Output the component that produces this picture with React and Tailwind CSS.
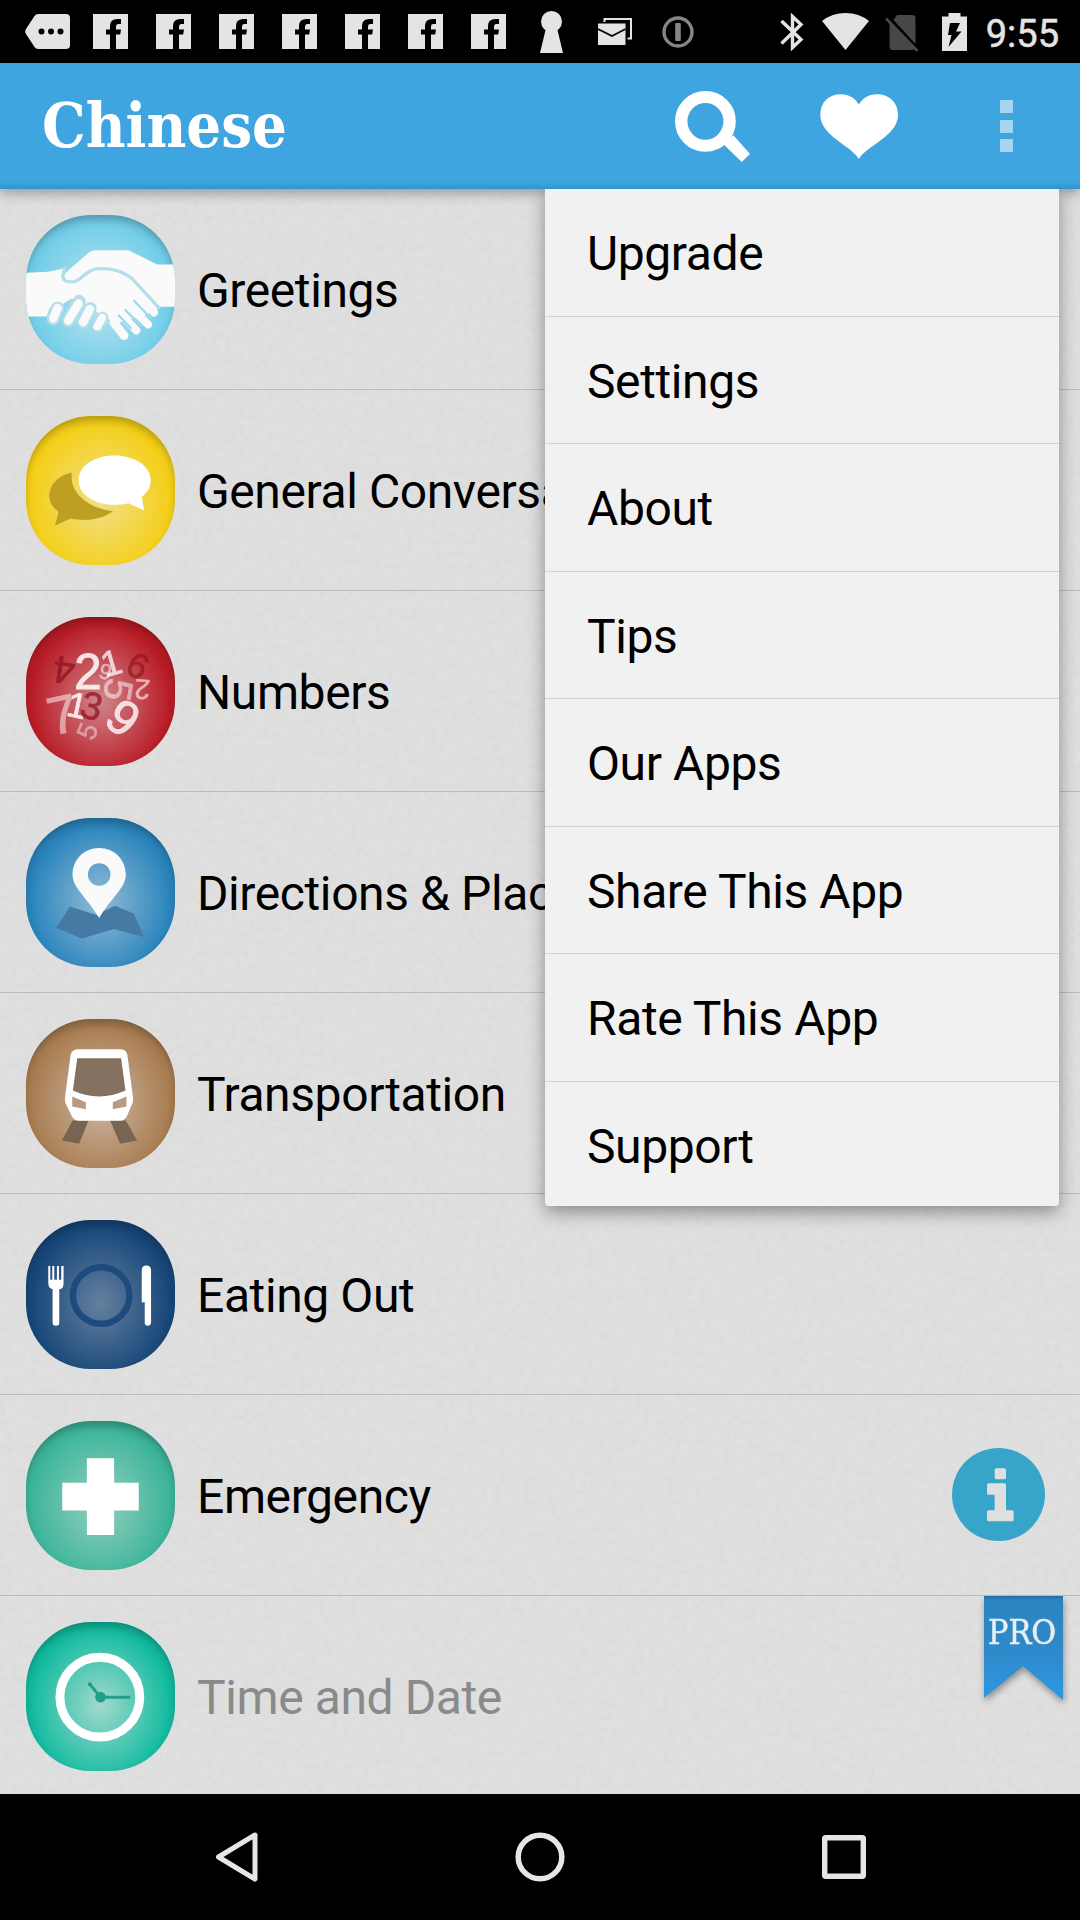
import React from "react";

const statusInk = "#e4e4e4";

/* ---------- status bar icons ---------- */

function PillIcon() {
  return (
    <svg width="45" height="35" viewBox="0 0 45 35" className="block">
      <path d="M13 0H41Q45 0 45 4V31Q45 35 41 35H13Q11 35 9.500 33L1 20Q-.5 17.500 1 15L9.500 2Q11 0 13 0Z" fill={statusInk} />
      <circle cx="16.500" cy="17.500" r="3" />
      <circle cx="26" cy="17.500" r="3" />
      <circle cx="35.500" cy="17.500" r="3" />
    </svg>
  );
}

function FacebookIcon() {
  return (
    <svg width="35" height="35" viewBox="0 0 35 35" className="block">
      <path d="M0 0H35V35H0Z" fill={statusInk} />
      <path d="M28 5V10H25Q23 10 23 12.500V15.500H28L27.200 20.500H23V35H17V20.500H13V15.500H17V12Q17 5 24.500 5Z" />
    </svg>
  );
}

function KeyholeIcon() {
  return (
    <svg width="23" height="42" viewBox="0 0 23 42" className="block">
      <circle cx="11.500" cy="10.500" r="10.500" fill={statusInk} />
      <path d="M6 17H17L23 42H0Z" fill={statusInk} />
    </svg>
  );
}

function MailIcon() {
  return (
    <svg width="34" height="27" viewBox="0 0 34 27" className="block">
      <path d="M6.500 4V1H33V20.500H29.500" fill="none" stroke={statusInk} strokeWidth="2" />
      <path d="M0 5.500H27.500V27H0Z" fill={statusInk} />
      <path d="M0 11L14 18L27.500 11" fill="none" stroke="#000" strokeWidth="1.600" />
    </svg>
  );
}

function KeyRingIcon() {
  return (
    <svg width="32" height="32" viewBox="0 0 32 32" className="block">
      <circle cx="16" cy="16" r="14" fill="none" stroke="#868686" strokeWidth="3.400" />
      <rect x="13.200" y="7" width="5.600" height="18" rx="1" fill="#868686" />
    </svg>
  );
}

function BluetoothIcon() {
  return (
    <svg width="24" height="38" viewBox="0 0 24 38" className="block">
      <path d="M1.500 8L21 26.500L12.500 34.500V3.500L21 11.500L1.500 30.500" fill="none" stroke={statusInk} strokeWidth="3.400" />
    </svg>
  );
}

function WifiIcon() {
  return (
    <svg width="47" height="37" viewBox="0 0 47 37" className="block">
      <path d="M0 8Q10 0 23.500 0T47 8L23.500 37Z" fill={statusInk} />
    </svg>
  );
}

function NoSimIcon() {
  return (
    <svg width="34" height="37" viewBox="0 0 34 37" className="block">
      <path d="M12 0H27Q30.500 0 30.500 3V29L8.500 5ZM4.500 7L30 34Q29 35 27 35H7.500Q4.500 35 4.500 32Z" fill="#474747" />
      <path d="M1 3.500L32.500 36" stroke="#474747" strokeWidth="2.600" />
    </svg>
  );
}

function BatteryIcon() {
  return (
    <svg width="25" height="38" viewBox="0 0 25 38" className="block">
      <path d="M6.500 0H18.500V3.500H25V38H0V3.500H6.500Z" fill={statusInk} />
      <path d="M8 10H18L14 18.500H19.500L6.500 34L9.500 22H6Z" />
    </svg>
  );
}

function StatusBar() {
  return (
    <div className="flex h-[63px] items-center bg-black">
      <div className="flex items-center pl-4">
        <div className="flex w-[63px] justify-center"><PillIcon /></div>
        {[1, 2, 3, 4, 5, 6, 7].map((n) => (
          <div key={n} className="flex w-[63px] justify-center"><FacebookIcon /></div>
        ))}
        <div className="flex w-[63px] justify-center"><KeyholeIcon /></div>
        <div className="flex w-[63px] justify-center"><MailIcon /></div>
        <div className="flex w-[63px] justify-center"><KeyRingIcon /></div>
      </div>
      <div className="ml-auto flex items-center pr-[21px]">
        <BluetoothIcon />
        <div className="ml-[18px]"><WifiIcon /></div>
        <div className="ml-4 mt-1"><NoSimIcon /></div>
        <div className="ml-[23px]"><BatteryIcon /></div>
        <div className="ml-[18px] mt-[4px] w-[74px] text-right text-[38px] leading-[40px] text-[#e4e4e4] [-webkit-text-stroke:0.5px_#e4e4e4]">9:55</div>
      </div>
    </div>
  );
}

/* ---------- app header ---------- */

function Header() {
  return (
    <header className="relative z-20 flex h-[126px] items-center bg-[#3ea5e1] bg-linear-to-b from-[#3ea5e1] from-94% to-[#3292d0] pl-[42px] shadow-[0_4px_12px_rgba(0,0,0,0.32)]">
      <h1 className="w-[245px] origin-left scale-x-[0.885] whitespace-nowrap font-['DejaVu_Serif'] text-[62px] font-bold leading-[70px] text-white">Chinese</h1>
      <svg width="75" height="71" viewBox="393 272 217 213" preserveAspectRatio="none" className="ml-[388px] block">
        <ellipse cx="481" cy="363" rx="70" ry="73" fill="none" stroke="#fff" strokeWidth="36" />
        <path d="M532 430L562 405L610 461L586 485Z" fill="#fff" />
      </svg>
      <svg width="78" height="65" viewBox="815 281 225 191" preserveAspectRatio="none" className="ml-[70px] block">
        <path d="M927 472C905 432 816 405 816 342C816 306 840 282 875 282C900 282 918 296 927 312C936 296 954 282 979 282C1014 282 1040 306 1040 342C1040 405 950 432 927 472Z" fill="#fff" />
      </svg>
      <div className="ml-[102px] flex flex-col gap-[6.500px]">
        <span className="size-[13px] bg-[#a6d4f1]" />
        <span className="size-[13px] bg-[#a6d4f1]" />
        <span className="size-[13px] bg-[#a6d4f1]" />
      </div>
    </header>
  );
}

/* ---------- category art, drawn in a 448-unit square ---------- */

function Art({ top, children }) {
  return (
    <svg width="149" height="149" viewBox={`78 ${top} 448 448`} className="block">
      {children}
    </svg>
  );
}

function HandshakeArt() {
  const gap = "#b3deea";
  const skin = "#fafafa";
  return (
    <Art top={75}>
      <path d="M527 224H473L392 184Q388 181 380 181H290Q277 181 267 188L205 242Q188 256 192 268L300 300L420 300L482 351H527Z" fill={skin} />
      <path d="M78 249L145 246L194 235L187 258C184 274 200 279 222 278C246 276 258 240 290 237C330 233 370 246 398 268L474 358L440 375L345 402L326 388L290 366L254 340L215 326L186 344L150 352L140 380H78Z" fill={skin} />
      <path d="M194 235L189 256C187 274 204 277 222 276C246 272 258 240 290 237C330 233 370 244 398 267L478 354" fill="none" stroke={gap} strokeWidth="10" strokeLinecap="round" strokeLinejoin="round" />
      <g strokeLinecap="round" stroke={gap}>
        <path d="M173 355L160 386" strokeWidth="40" />
        <path d="M238 335L206 392" strokeWidth="40" />
        <path d="M271 356L250 396" strokeWidth="39" />
        <path d="M308 384L294 410" strokeWidth="36" />
      </g>
      <g strokeLinecap="round" stroke={skin}>
        <path d="M173 355L160 386" strokeWidth="26" />
        <path d="M236 341L205 392" strokeWidth="26" />
        <path d="M270 358L250 397" strokeWidth="26" />
        <path d="M307 384L293 410" strokeWidth="24" />
        <path d="M342 398L373 438" strokeWidth="26" />
        <path d="M360 370L410 422" strokeWidth="24" />
        <path d="M385 345L445 404" strokeWidth="24" />
        <path d="M400 300L463 368" strokeWidth="24" />
      </g>
      <path d="M357 377L393 415M377 361L424 408M403 333L452 384" fill="none" stroke="#9fd9ea" strokeWidth="7" strokeLinecap="round" />
    </Art>
  );
}

function ChatArt() {
  return (
    <Art top={678}>
      <path d="M216 848C172 858 148 886 148 918C148 938 160 955 176 966L165 1008L212 986C262 996 310 989 340 964C274 958 206 914 216 848Z" fill="#bda021" />
      <path d="M343 797C405 797 453 829 453 872C453 893 443 908 426 921L433 962L386 940C373 944 358 945 343 945C283 945 236 913 236 872C236 829 283 797 343 797Z" fill="#fff" />
    </Art>
  );
}

/* glyph, centre x, centre y, size, rotation, colour, opacity */
const digits = [
  ["4", 192, 243, 116, 188, "#8a0f1c", 0.7],
  ["2", 264, 244, 148, 0, "#fff", 0.85],
  ["9", 317, 244, 66, 14, "#fff", 0.55],
  ["1", 334, 217, 108, -16, "#fff", 0.75],
  ["6", 415, 226, 106, 28, "#8a0f1c", 0.6],
  ["5", 357, 300, 118, 100, "#fff", 0.5],
  ["2", 428, 300, 84, 184, "#fff", 0.6],
  ["7", 187, 372, 160, -12, "#fff", 0.5],
  ["1", 232, 345, 106, 12, "#fff", 0.85],
  ["3", 276, 347, 116, 14, "#8a0f1c", 0.7],
  ["9", 372, 382, 148, 38, "#fff", 0.8],
  ["5", 261, 424, 82, -68, "#fff", 0.42],
];

function NumbersArt() {
  return (
    <Art top={81}>
      {digits.map(([d, x, y, size, turn, color, alpha], i) => (
        <text
          key={i}
          transform={`translate(${x} ${y}) rotate(${turn})`}
          y={size * 0.36}
          textAnchor="middle"
          fontFamily="Liberation Sans, sans-serif"
          fontSize={size}
          fill={color}
          stroke={color}
          strokeWidth={size / 50}
          opacity={alpha}
        >
          {d}
        </text>
      ))}
    </Art>
  );
}

function MapArt() {
  return (
    <Art top={684}>
      <path d="M210 950L290 976L345 948L402 971L433 1042L343 1018L246 1046L168 1015Z" fill="#4779a5" />
      <path fillRule="evenodd" d="M298 774C344 774 378 810 378 854C378 895 336 920 298 985C260 920 218 895 218 854C218 810 252 774 298 774ZM298 820A34 34 0 1 0 298 888A34 34 0 1 0 298 820Z" fill="#fafafa" />
    </Art>
  );
}

function TrainArt() {
  return (
    <Art top={87}>
      <path d="M218 392H266L238 462L186 452ZM331 392H378L412 452L361 462Z" fill="#776452" />
      <path d="M237 178H361Q380 178 383 196L400 325Q401 335 396 345L382 378Q375 393 360 393H238Q222 393 215 378L199 345Q194 335 195 325L212 196Q215 178 237 178Z" fill="#fff" />
      <path d="M232 205H364L377 302Q298 338 219 302Z" fill="#85715f" />
      <path d="M217 320L258 337V358L217 350ZM380 320L339 337V358L380 350Z" fill="#b89a80" />
    </Art>
  );
}

function DiningArt() {
  return (
    <Art top={690}>
      <circle cx="304" cy="917" r="85" fill="none" stroke="#1d4b7d" strokeWidth="19" />
      <path d="M145 828H151V870H157V828H163V870H171V828H177V870H184V828H191V880Q191 898 178 898V999Q178 1008 168 1008T158 999V898Q146 896 145 880Z" fill="#fff" />
      <path d="M440 827Q454 827 454 842V996Q454 1008 444 1008T435 996V937H426V842Q426 827 440 827Z" fill="#fff" />
    </Art>
  );
}

function CrossArt() {
  return (
    <Art top={93}>
      <path d="M261 205H343V279H417V362H343V436H261V362H187V279H261Z" fill="#fff" />
    </Art>
  );
}

function ClockArt() {
  return (
    <Art top={696}>
      <circle cx="300" cy="922" r="120" fill="none" stroke="#fff" strokeWidth="27" />
      <path d="M269 882L302 922H391" fill="none" stroke="#219e8a" strokeWidth="9" />
      <circle cx="302" cy="922" r="16" fill="#219e8a" />
      <circle cx="270" cy="883" r="6" fill="#219e8a" />
    </Art>
  );
}

const rows = [
  { label: "Greetings", Icon: HandshakeArt, tint: "from-[#bde3ec] to-[#72cee9]" },
  { label: "General Conversation", Icon: ChatArt, tint: "from-[#efe08c] to-[#f5cf18]" },
  { label: "Numbers", Icon: NumbersArt, tint: "from-[#d0858b] to-[#b91c26]" },
  { label: "Directions & Places", Icon: MapArt, tint: "from-[#93bcd7] to-[#2b85bc]" },
  { label: "Transportation", Icon: TrainArt, tint: "from-[#cbb6a4] to-[#a97d51]" },
  { label: "Eating Out", Icon: DiningArt, tint: "from-[#65809f] to-[#174779]" },
  { label: "Emergency", Icon: CrossArt, tint: "from-[#94cfbf] to-[#3db59a]", info: true },
  { label: "Time and Date", Icon: ClockArt, tint: "from-[#a3d9cd] to-[#12bba0]", locked: true },
];

function InfoIcon() {
  return (
    <svg width="93" height="93" viewBox="156 143 279 279" className="block">
      <circle cx="295.500" cy="282.500" r="139.500" fill="#36a5c9" />
      <path d="M289 204H313Q318 204 318 209V232Q318 237 313 237H289Q284 237 284 232V209Q284 204 289 204ZM266 249H313Q318 249 318 254V330H336Q341 330 341 335V358Q341 363 336 363H266Q261 363 261 358V335Q261 330 266 330H284V283H266Q261 283 261 278V254Q261 249 266 249Z" fill="#dfdfdf" />
    </svg>
  );
}

function ProRibbon() {
  return (
    <div className="relative mb-auto mr-[17px] w-[79px]">
      <svg width="79" height="104" viewBox="0 0 79 104" className="block overflow-visible drop-shadow-[1px_4px_3px_rgba(0,0,0,0.35)]">
        <defs>
          <linearGradient id="ribbon" x1="0" y1="0" x2="0" y2="1">
            <stop offset="0" stopColor="#1f6fa6" />
            <stop offset="0.04" stopColor="#2a85c2" />
            <stop offset="0.55" stopColor="#3089ca" />
            <stop offset="1" stopColor="#2b99e6" />
          </linearGradient>
        </defs>
        <path d="M0 0H79V104L39 70L0 102Z" fill="url(#ribbon)" />
      </svg>
      <span className="absolute left-[4px] top-[17px] origin-left scale-x-[0.92] font-['DejaVu_Serif'] text-[33px] leading-[40px] text-[#e6eef3] [-webkit-text-stroke:0.5px_#e6eef3]">PRO</span>
    </div>
  );
}

function Row({ label, Icon, tint, info, locked }) {
  return (
    <li className="flex h-[201px] shrink-0 items-center border-b border-[#bcbcbc] pl-[26px]">
      <div className={`size-[149px] shrink-0 overflow-hidden rounded-[65px] bg-radial-[at_50%_56%] to-66% ${tint}`}>
        <div className="rounded-[65px] shadow-[inset_0_6px_10px_-2px_rgba(0,0,0,0.3)]">
          <Icon />
        </div>
      </div>
      <span className={`ml-[22px] mt-[3px] max-w-[348px] overflow-hidden whitespace-nowrap text-[48px] leading-[58px] tracking-[-0.4px] ${locked ? "text-[#8a8a8a]" : "text-black"}`}>{label}</span>
      {info && <div className="mb-[2px] ml-auto mr-[35px]"><InfoIcon /></div>}
      {locked && <div className="ml-auto flex self-start"><ProRibbon /></div>}
    </li>
  );
}

const menuItems = ["Upgrade", "Settings", "About", "Tips", "Our Apps", "Share This App", "Rate This App", "Support"];

function OverflowMenu() {
  return (
    <div className="absolute left-[545px] top-0 z-30 h-[1017px] w-[514px] overflow-hidden rounded-b-[4px] bg-[#f1f1f1]">
      {menuItems.map((item) => (
        <div key={item} className="flex h-[127.500px] items-center border-b border-[#d2d2d2] pl-[42px] pt-[4px] text-[48px] leading-[56px] tracking-[-0.4px] text-black last:border-b-0">
          {item}
        </div>
      ))}
    </div>
  );
}

function PaperGrain() {
  return (
    <svg className="pointer-events-none absolute inset-0 size-full opacity-[0.06]">
      <filter id="grain">
        <feTurbulence type="fractalNoise" baseFrequency="0.16" numOctaves="3" seed="4" />
        <feColorMatrix type="saturate" values="0" />
        <feComponentTransfer>
          <feFuncA type="linear" slope="0" intercept="1" />
        </feComponentTransfer>
      </filter>
      <rect width="100%" height="100%" filter="url(#grain)" />
    </svg>
  );
}

function NavBar() {
  return (
    <nav className="flex h-[126px] items-center bg-black pl-[215px]">
      <svg width="43" height="50" viewBox="0 0 43 50" className="block">
        <path d="M40 3L3.500 25L40 47Z" fill="none" stroke="#e6e6e6" strokeWidth="5" strokeLinejoin="round" />
      </svg>
      <svg width="50" height="50" viewBox="0 0 50 50" className="ml-[257px] block">
        <circle cx="25" cy="25" r="21.800" fill="none" stroke="#e6e6e6" strokeWidth="5.500" />
      </svg>
      <svg width="44" height="44" viewBox="0 0 44 44" className="ml-[257px] block">
        <rect x="2.700" y="2.700" width="38.600" height="38.600" rx="1" fill="none" stroke="#e6e6e6" strokeWidth="5.400" />
      </svg>
    </nav>
  );
}

export default function App() {
  return (
    <div className="flex h-[1920px] w-[1080px] flex-col overflow-hidden bg-black font-[Roboto,sans-serif]">
      <StatusBar />
      <Header />
      <main className="relative z-10 h-[1605px] bg-[#e1e1e1]">
        <div className="relative h-full overflow-hidden">
          <PaperGrain />
          <ul className="relative flex flex-col">
            {rows.map((row) => (
              <Row key={row.label} {...row} />
            ))}
          </ul>
          <div className="absolute left-[545px] top-0 h-[1017px] w-[514px] rounded-b-[4px] shadow-[0_6px_18px_rgba(0,0,0,0.38)]" />
        </div>
      </main>
      <div className="relative z-30 order-first h-0">
        <div className="absolute left-0 top-[189px]">
          <OverflowMenu />
        </div>
      </div>
      <NavBar />
    </div>
  );
}
